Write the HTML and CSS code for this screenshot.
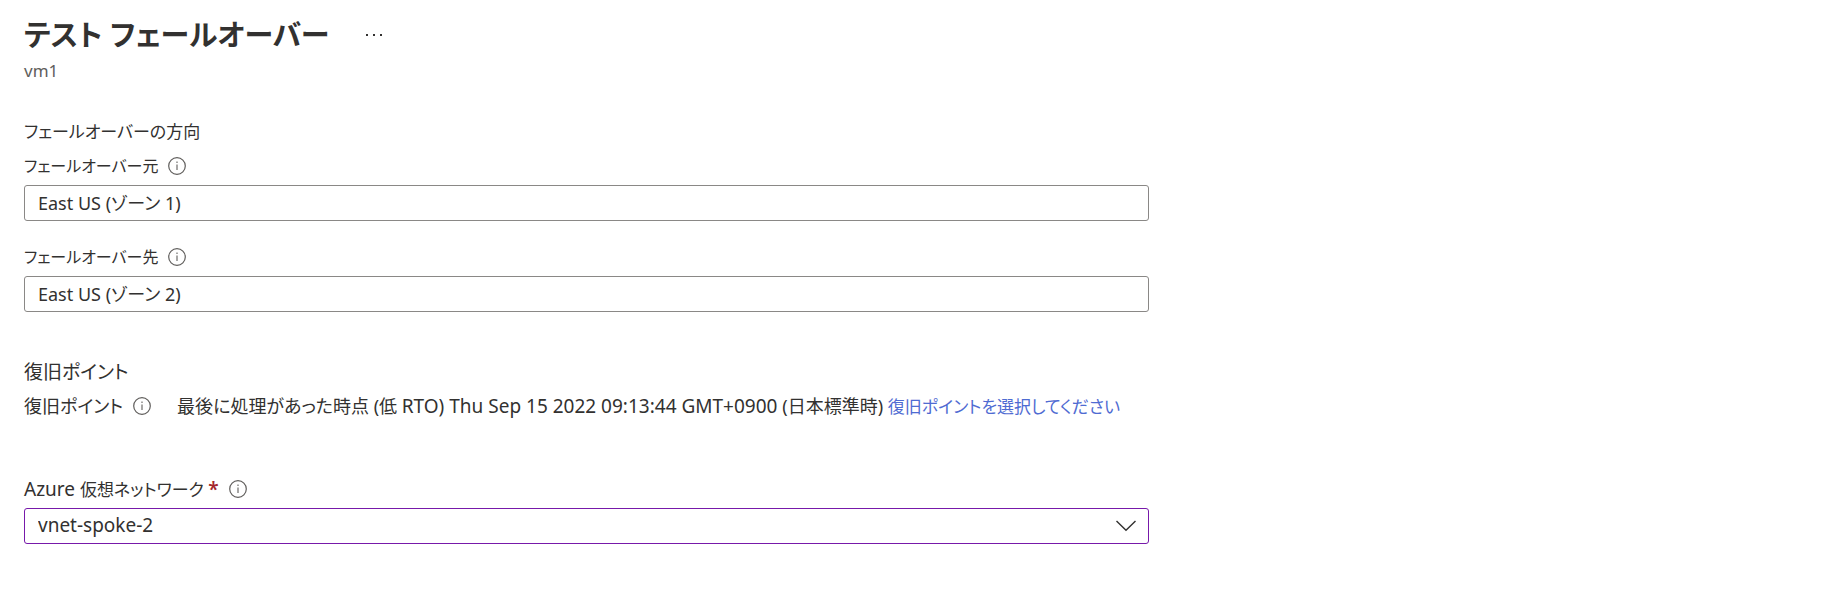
FILE: index.html
```html
<!DOCTYPE html>
<html lang="ja">
<head>
<meta charset="utf-8">
<meta name="viewport" content="width=device-width, initial-scale=1">
<title>テスト フェールオーバー</title>
<link rel="stylesheet" href="styles.css">
</head>
<body>
<svg class="sprite" aria-hidden="true">
  <symbol id="info" viewBox="0 0 18 18">
    <circle cx="9" cy="9" r="8.3" fill="none" stroke="currentColor" stroke-width="1.2"/>
    <path d="M9 7.500v5.500M9 4.600v1.400" fill="none" stroke="currentColor" stroke-width="1.1"/>
  </symbol>
</svg>
<main class="blade">
  <header class="blade-header">
    <div class="title-row">
      <h1 class="title">テスト フェールオーバー</h1>
      <button class="more" type="button" aria-label="その他">
        <svg class="more-icon" viewBox="0 0 18 4" aria-hidden="true"><path d="M1 1h2v2H1zM8 1h2v2H8zM15 1h2v2h-2z" fill="currentColor"/></svg>
      </button>
    </div>
    <p class="subtitle">vm1</p>
  </header>

  <form class="form">
    <section class="section">
      <h2 class="heading compact">フェールオーバーの方向</h2>
      <div class="field">
        <div class="label-row">
          <label class="label-kana" for="from">フェールオーバー元</label>
          <button class="info" type="button" aria-label="情報"><svg class="info-icon"><use href="#info"/></svg></button>
        </div>
        <input class="control" id="from" type="text" value="East US (ゾーン 1)" readonly>
      </div>
      <div class="field">
        <div class="label-row">
          <label class="label-kana" for="to">フェールオーバー先</label>
          <button class="info" type="button" aria-label="情報"><svg class="info-icon"><use href="#info"/></svg></button>
        </div>
        <input class="control" id="to" type="text" value="East US (ゾーン 2)" readonly>
      </div>
    </section>

    <section class="section">
      <h2 class="heading large">復旧ポイント</h2>
      <div class="recovery">
        <div class="label-row">
          <span>復旧ポイント</span>
          <button class="info" type="button" aria-label="情報"><svg class="info-icon"><use href="#info"/></svg></button>
        </div>
        <p class="recovery-text">最後に処理があった時点 (低 <span class="large">RTO) Thu Sep 15 2022 09:13:44 GMT+0900 </span>(日本標準時) <a class="link compact" href="#">復旧ポイントを選択してください</a></p>
      </div>
    </section>

    <section class="section section-network">
      <div class="field">
        <div class="label-row">
          <label class="compact" for="vnet"><span class="large">Azure </span>仮想ネットワーク <span class="required large">*</span></label>
          <button class="info" type="button" aria-label="情報"><svg class="info-icon"><use href="#info"/></svg></button>
        </div>
        <div class="select-box">
          <select class="control control-active large" id="vnet"><option>vnet-spoke-2</option></select>
          <svg class="chevron" viewBox="0 0 20 12" aria-hidden="true"><path d="M.5 1L10 10.3 19.500 1" fill="none" stroke="currentColor" stroke-width="1.4"/></svg>
        </div>
      </div>
    </section>
  </form>
</main>
</body>
</html>
```
FILE: styles.css
```css
* { box-sizing: border-box; }

body {
  margin: 0;
  background: #fff;
  color: #323130;
  font: 18px/24px "Noto Sans", "Noto Sans CJK JP", sans-serif;
  font-feature-settings: "palt";
}

h1, h2, p { margin: 0; font-weight: 400; }

button {
  display: flex;
  padding: 0;
  border: 0;
  background: none;
  color: inherit;
}

.sprite { display: none; }
.blade { padding: 13px 24px; }
.title-row { display: flex; align-items: center; gap: 36px; }
.title { font-size: 29px; line-height: 44px; font-weight: 700; }
.more-icon { width: 18px; height: 4px; }
.subtitle { color: #605e5c; font-size: 17px; line-height: 28px; }

.form {
  display: grid;
  gap: 48px;
  max-width: 1125px;
  margin-top: 35px;
}

.section { display: grid; gap: 10px; }
.section-network { margin-top: 11px; }
.heading { line-height: 24px; }
.field { display: grid; gap: 7px; }
.field + .field { margin-top: 14px; }
.label-row { display: flex; align-items: center; gap: 10px; height: 24px; }
.label-kana { font-size: 16px; }
.info { color: #605e5c; }
.info-icon { width: 18px; height: 18px; }
.required { color: #a4262c; font-weight: 600; }

.control {
  width: 100%;
  height: 36px;
  padding: 0 13px 2px;
  border: 1px solid #8a8886;
  border-radius: 3px;
  outline: 0;
  appearance: none;
  background: #fff;
  color: inherit;
  font: inherit;
  font-feature-settings: inherit;
}

.control-active { border-color: #7719aa; }
.select-box { display: grid; align-items: center; }
.select-box > * { grid-area: 1 / 1; }
.chevron { width: 20px; height: 12px; margin-right: 13px; justify-self: end; pointer-events: none; }
.recovery { display: flex; gap: 26px; height: 24px; }
.recovery-text { white-space: nowrap; }
.link { color: #4f6bd2; text-decoration: none; }

.compact { font-size: 17px; }
.large { font-size: 19px; }
```
